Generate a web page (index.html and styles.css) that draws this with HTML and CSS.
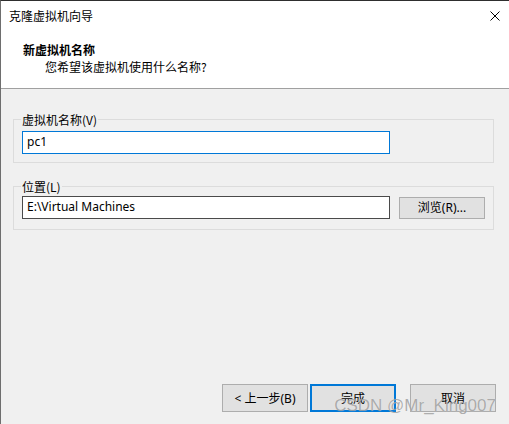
FILE: index.html
```html
<!DOCTYPE html>
<html lang="zh-CN">
<head>
<meta charset="utf-8">
<title>克隆虚拟机向导</title>
<link rel="stylesheet" href="styles.css">
</head>
<body>
<div class="window">
  <div class="titlebar">
    <span class="title">克隆虚拟机向导</span>
    <svg class="close" width="10" height="10" viewBox="0 0 10 10" aria-hidden="true">
      <path d="M0.5 0.5L9.5 9.5M9.5 0.5L0.5 9.5" stroke="#000" stroke-width="1" fill="none"/>
    </svg>
  </div>
  <div class="header">
    <div class="heading">新虚拟机名称</div>
    <div class="subheading">您希望该虚拟机使用什么名称?</div>
  </div>
  <div class="content">
    <fieldset class="group group-name">
      <legend>虚拟机名称(V)</legend>
      <div class="field field-focused">pc1</div>
    </fieldset>
    <fieldset class="group group-location">
      <legend>位置(L)</legend>
      <div class="row">
        <div class="field">E:\Virtual Machines</div>
        <button class="btn btn-browse">浏览(R)...</button>
      </div>
    </fieldset>
  </div>
  <div class="footer">
    <button class="btn btn-nav">&lt; 上一步(B)</button>
    <button class="btn btn-nav btn-default">完成</button>
    <button class="btn btn-nav btn-cancel">取消</button>
  </div>
  <div class="watermark">CSDN @Mr_King007</div>
</div>
</body>
</html>
```
FILE: styles.css
```css
html, body {
  margin: 0;
  padding: 0;
}

body {
  width: 509px;
  height: 424px;
  overflow: hidden;
  background: #f0f0f0;
  font-family: "Noto Sans", "Noto Sans CJK SC", sans-serif;
  font-size: 12px;
  color: #000;
}

.window {
  position: relative;
  box-sizing: border-box;
  height: 424px;
  border-top: 1px solid #2e2e2e;
  border-left: 1px solid #6e6e6e;
  display: flex;
  flex-direction: column;
}

/* title bar */
.titlebar {
  height: 29px;
  background: #fff;
  display: flex;
  align-items: center;
  justify-content: space-between;
  padding: 0 9px 0 8px;
}

.title {
  line-height: 16px;
  font-family: "Noto Sans CJK SC", sans-serif;
}

.close {
  display: block;
}

/* page header */
.header {
  height: 46px;
  background: #fff;
  border-bottom: 1px solid #a0a0a0;
  padding: 12px 0 0 22px;
}

.heading {
  font-family: "Noto Sans CJK SC", sans-serif;
  font-weight: bold;
  line-height: 16px;
}

.subheading {
  font-family: "Noto Sans CJK SC", sans-serif;
  margin: 1px 0 0 22px;
  line-height: 16px;
}

/* body */
.content {
  padding: 22px 0 0 12px;
}

.group {
  box-sizing: border-box;
  width: 481px;
  margin: 0;
  min-inline-size: 0;
  border: 1px solid #dcdcdc;
  padding: 3px 0 8px 7px;
}

.group legend {
  padding: 0 1px;
  line-height: 17px;
  font-family: "Noto Sans CJK SC", sans-serif;
}

.group-location {
  margin-top: 15px;
  padding-top: 1px;
  padding-bottom: 10px;
}

.field {
  box-sizing: border-box;
  width: 368px;
  height: 23px;
  margin-left: 1px;
  padding: 0 4px;
  border: 1px solid #4a4a4a;
  background: #fff;
  line-height: 20px;
  white-space: nowrap;
}

.field-focused {
  border-color: #0078d7;
}

.row {
  display: flex;
  align-items: flex-start;
}

/* buttons */
.btn {
  box-sizing: border-box;
  margin: 0;
  padding: 0;
  background: #e1e1e1;
  border: 1px solid #adadad;
  font-family: "Noto Sans", "Noto Sans CJK SC", sans-serif;
  font-size: 12px;
  color: #000;
}

.btn-browse {
  width: 86px;
  height: 22px;
  margin: 1px 0 0 9px;
  line-height: 18px;
}

.footer {
  margin-top: auto;
  display: flex;
  justify-content: flex-end;
  padding: 0 13px 12px 0;
}

.btn-nav {
  width: 86px;
  height: 28px;
}

.btn-default {
  margin-left: 2px;
  border: 2px solid #0078d7;
}

.btn-cancel {
  margin-left: 14px;
}

/* site watermark over the corner */
.watermark {
  position: absolute;
  right: 13px;
  bottom: 8px;
  font-family: "Liberation Sans", sans-serif;
  font-size: 17px;
  line-height: 20px;
  color: rgba(140, 140, 140, 0.7);
  text-shadow: 0 0 1px rgba(255, 255, 255, 0.6);
}
```
